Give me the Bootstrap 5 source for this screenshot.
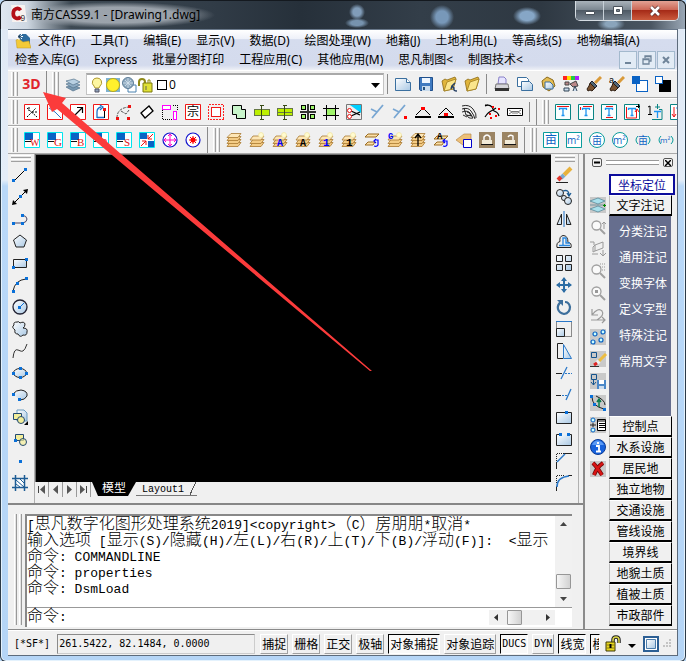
<!DOCTYPE html>
<html lang="zh-CN">
<head>
<meta charset="utf-8">
<meta name="viewport" content="width=device-width, initial-scale=1">
<title>南方CASS9.1 - [Drawing1.dwg]</title>
<link rel="stylesheet" href="https://cdn.jsdelivr.net/npm/bootstrap@5.3.0/dist/css/bootstrap.min.css">
<style>
:root{--face:#f0f0f0;--edge:#8a8a8a}
body{font:12px/16px "Noto Sans","Noto Sans CJK SC",sans-serif;color:#000;background:#b9d7f5}
button{padding:0;border:0;background:none;color:inherit;font:inherit}
svg{display:block;flex:none}
.win{min-height:100vh;padding:0 8px 6px;border-radius:6px;position:relative;overflow:hidden;
 background:linear-gradient(#dfe8f4 0,#e4edf8 180px,#b9d8f8 186px,#b5d5f6 100%);box-shadow:inset 0 0 0 1px #2c3a48,inset 0 0 0 2px #e4f2fd}
.titlebar{height:29px;margin:0 -8px;padding-left:9px;border:1px solid #14191f;border-bottom:0;border-radius:6px 6px 0 0;
 background:radial-gradient(ellipse 98px 13px at 116px 14px,#a9b0b8e0 60%,#a9b0b800 100%),
 radial-gradient(circle 8px at 356px 11px,#819db9 50%,#819db900),radial-gradient(ellipse 12px 5px at 356px 22px,#7793ae 50%,#819db900),
 radial-gradient(circle 12px at 441px 16px,#7898b9 50%,#7898b900),radial-gradient(ellipse 14px 9px at 526px 15px,#86a6c6 50%,#7898b900),
 radial-gradient(ellipse 14px 7px at 610px 23px,#8aa4bb 40%,#7898b900),
 linear-gradient(90deg,#dfe7f2 0,#cfd8e2 26px,#3d4953 70px,#313c47 210px,#26303a 300px,#333e49 420px,#2e3842 540px,#4a5662 650px,#9aa7b5 100%)}
.captions{height:20px;border:1px solid #d5dce2;border-top:0;border-radius:0 0 5px 5px;overflow:hidden;margin-right:6px}
.captions button{width:28px;border-right:1px solid #c7d0d8;background:linear-gradient(#a9b2ba,#7a858f 48%,#4f5a65 50%,#76828e)}
.captions button:last-child{width:46px;border:0;background:linear-gradient(#e2a294,#cc6553 48%,#a62b18 50%,#cb5a3c)}
.client{background:var(--face);border:1px solid #5d6b7b;border-width:0 1px 1px 0}
.menus{min-height:41px;padding:1px 0 0 7px;border-top:1px solid #69788a;background:linear-gradient(#fff,#eef1f9 22%,#d5dcee 24%,#d4dbed 88%,#eef0f6)}
.menus a{color:#000;text-decoration:none;white-space:nowrap;line-height:19px}
.menurow{gap:15px;height:19px}
.menuicon{margin-right:-8px}
.mdi{gap:1px;margin-right:2px}
.mdi button{width:18px;height:18px;border:1px solid #a3b9cd;background:#e2ebf5}
.bar{height:28px;border-top:1px solid #fff;border-bottom:1px solid #a9a9a9;overflow:hidden}
.band{padding:0 3px 0 5px;border-right:1px solid var(--edge);flex:none}
.band:first-child{padding-left:3px}
.band:last-child{border:0}
.grip{width:7px;height:24px;margin-right:2px;flex:none;background:linear-gradient(90deg,#fff 1px,#e4e4e4 1px 2px,#a0a0a0 2px 3px,var(--face) 3px 4px,#fff 4px 5px,#e4e4e4 5px 6px,#a0a0a0 6px)}
.tb{width:23px;height:23px;display:flex;align-items:center;justify-content:center;flex:none}
.tb svg,.lt svg{width:16px;height:16px;overflow:visible}
.split{width:1px;height:20px;background:#8a8a8a;margin:0 3px;flex:none}
.d3{font:bold 14px/20px "Open Sans",sans-serif;color:#e0242c}
.layerbox{width:298px;height:22px;margin-left:2px;padding-left:2px;background:#fff;border:1px solid #c4c4c4;border-top:2px solid #a9a9a9}
.layerbox svg{width:16px;height:16px}
.layerbox select{appearance:none;border:0;background:none;padding:0;font:12px/16px "Open Sans",sans-serif;color:#000;outline:0}
.layerbox .swatch{width:10px;height:10px;border:1px solid #000;margin:0 2px 0 4px}
.toolcol{width:27px;padding-bottom:9px;flex:none;border-right:1px solid #b0b0b0}
.toolcol.modify{width:28px;padding-left:1px;margin-right:4px}
.hgrip{width:20px;height:8px;margin:1px auto;background:linear-gradient(#fff 1px,#e4e4e4 1px 2px,#a0a0a0 2px 3px,var(--face) 3px 4px,#fff 4px 5px,#e4e4e4 5px 6px,#a0a0a0 6px 7px,#0000 7px)}
.lt{width:24px;height:22px;display:flex;align-items:center;justify-content:center}
.shrinkable{min-width:0}
.drawing{background:#000;border:1px solid #6d6d6d;border-width:1px 0 0 1px}
.tabs{height:17px;margin-bottom:4px;font:12px/16px "Liberation Mono","Noto Sans CJK SC",monospace}
.tabs .step{width:14px;height:15px;border-right:1px solid #9a9a9a;display:flex;align-items:center;justify-content:center}
.tabnow{width:44px;color:#fff;background:#000;clip-path:polygon(0 0,100% 0,36px 100%,6px 100%);margin-left:1px;height:14px;line-height:15px}
.tabalt{padding:0 13px 0 6px;font-size:10px;height:14px;line-height:15px;background:linear-gradient(115deg,#0000 calc(100% - 7px),#555 calc(100% - 7px) calc(100% - 6px),#0000 calc(100% - 6px));border-bottom:1px solid #777}
.cmd{border-top:2px solid #868686;padding:9px 11px 2px 6px}
.cmdgrip{width:8px;margin:0 3px 2px 0;background:linear-gradient(90deg,#fff 1px,#e4e4e4 1px 2px,#999 2px 3px,var(--face) 3px 5px,#fff 5px 6px,#e4e4e4 6px 7px,#999 7px)}
.cmdbox{background:#fff;border:1px solid #888;border-width:2px 0 0 2px;min-width:0;font:300 16px/16px "Liberation Mono","Noto Sans CJK SC",monospace}
.cmdbox .lt2{font-size:13px}
.history{height:92px;border-bottom:1px solid #999}
.lines{overflow:hidden;white-space:pre;min-width:0;padding-top:1px}
.lines div{height:16px}
.vscroll{width:17px;background:#f1f1f1;padding:4px 0;flex:none}
.prompt{height:19px}
.prompt input{min-width:0;border:0;outline:0;padding:0;font:13px/16px "Liberation Mono",monospace}
.hscroll{width:66px;background:#f1f1f1;margin-right:17px;padding:0 4px;flex:none}
.thumb{width:15px;height:15px;border:1px solid #979797;border-radius:1px;background:linear-gradient(90deg,#f6f6f6,#d2d2d2)}
.side{width:94px;border-left:2px solid #8b8b8b;flex:none;padding-left:1px}
.sidehead{height:17px;margin-bottom:3px;padding:0 4px 0 6px;gap:4px}
.rule2{height:5px;border:1px solid #999;border-width:1px 0;background:#fff}
.boxbtn{width:10px;height:9px;border:1px solid #555;border-radius:2px;display:flex;align-items:center;justify-content:center}
.sideicons{width:23px;padding-top:20px}
.sideicons .gb{background:#c9c9c9}
.cat{font:12px/16px "Noto Sans CJK SC",sans-serif}
.cat .hd{display:block;width:63px;height:21px;background:var(--face);border:solid #000;border-width:1px 1px 2px;border-left-color:#bbb;border-top-color:#fff;line-height:16px}
.cat .hot{width:66px;height:21px;border:2px solid #0c0c9c;background:#fff;color:#0c0c9c;line-height:15px}
.sub{width:62px;background:#666e8e;padding:2px 0 42px;color:#fff}
.sub button{display:block;width:100%;height:26px;padding-left:10px;text-align:left;white-space:nowrap}
.status{height:26px;border-top:1px solid #8a8a8a;padding:2px 6px 0 6px;gap:4px;font:12px/18px "Noto Sans CJK SC",sans-serif;overflow:hidden;box-shadow:inset 0 1px #fff}
.status .num{font:10px/18px "DejaVu Sans Mono",monospace}
.coord{width:198px;height:20px;border:1px solid #8a8a8a;border-color:#8a8a8a #ccc #ccc #8a8a8a;padding-left:1px;margin:0 1px 0 3px;flex:none}
.st{height:20px;padding:0 1px;border:1px solid;border-color:#fff #a0a0a0 #a0a0a0 #fff;white-space:nowrap;flex:none;line-height:18px}
.st.on{border-color:#000 #fff #fff #000;background:#f8f8f8}
.cutoff{width:10px;overflow:hidden}
.pointer{position:absolute;left:0;top:0;pointer-events:none}
.px{shape-rendering:crispEdges}
</style>
<script src="https://cdn.jsdelivr.net/npm/bootstrap@5.3.0/dist/js/bootstrap.bundle.min.js"></script>
</head>
<body>
<svg width="0" height="0" class="position-absolute" aria-hidden="true"><defs>
<linearGradient id="gl" x1="0" y1="0" x2="1" y2="1"><stop offset="0" stop-color="#fff"/><stop offset="1" stop-color="#a9c8e4"/></linearGradient>
<symbol id="stack" viewBox="0 0 16 16"><g stroke="#a87830" stroke-width=".8" fill="#f3cc86"><path d="M4 10.500h11l-3 4H1z"/><path d="M4 7.500h11l-3 4H1z"/><path d="M4 4.500h11l-3 4H1z"/><path d="M5 1.500h10l-3 4H1z" fill="#fde6b6"/></g></symbol>
<symbol id="low" viewBox="0 0 16 16"><g stroke="#a87830" stroke-width=".8" fill="#f3cc86"><path d="M4 10.500h11l-3 4H1z"/><path d="M4 7.500h11l-3 4H1z"/><path d="M4 4h11l-3 4H1z" fill="#fde6b6"/></g><circle cx="12" cy="3" r="2.500" fill="#fffbd0" stroke="#f0e3a0" stroke-width=".7"/></symbol>
<symbol id="bluebox" viewBox="0 0 16 16"><path d="M.5.5h15v15H.5z" fill="#fff" stroke="#00e5ee"/><path d="M1 1h8v7H1z" fill="#0a62c4"/><path d="M1 9.500h6" stroke="#111"/></symbol>
<symbol id="redbox" viewBox="0 0 16 16"><path d="M.5.5h15v15H.5z" fill="#fff" stroke="#f01818"/></symbol>
<symbol id="tealT" viewBox="0 0 16 16"><path d="M.5.5h15v15H.5z" fill="#f8ffff" stroke="#0a8484"/><path d="M4.500 6V4.500h7V6M8 4.500v7M6.500 11.500h3" fill="none" stroke="#1c94f2" stroke-width="1.300"/></symbol>
<symbol id="sheet" viewBox="0 0 16 16"><path d="M.5 2.500h11l4 4v8H.5z" fill="url(#gl)" stroke="#3a6f9f"/><path d="M11.500 2.500v4h4" fill="#fff" stroke="#3a6f9f"/></symbol>
<symbol id="folder" viewBox="0 0 16 16"><path d="M1 5l3-2 2 1 8-3 1 2-3 10-9 2z" fill="#e0b53c" stroke="#8b6914" stroke-width=".8"/><path d="M3 15l3-9 9-3-3 10z" fill="#fbe68c" stroke="#a07c1c" stroke-width=".8"/></symbol>
<symbol id="brush" viewBox="0 0 16 16"><path d="M15 1L9 7" stroke="#d99a3a" stroke-width="3"/><path d="M6 5l5 5-2 2-5-5z" fill="#526878" stroke="#223"/><path d="M4 7l5 5-3 3-2-1-2 1-1-2 2-3z" fill="#7a5230" stroke="#2c1c10"/></symbol>
<symbol id="mag" viewBox="0 0 16 16"><circle cx="6.500" cy="6.500" r="4.500" fill="#fafafa" stroke="#a0a0a0" stroke-width="1.300"/><path d="M10 10l5 5" stroke="#a0a0a0" stroke-width="2"/></symbol>
</defs></svg>

<div class="win">
<header class="titlebar d-flex align-items-start">
 <svg class="mt-1" width="17" height="19" viewBox="0 0 16 18"><path d="M1 0h13l2 16H2z" fill="#f7f2f0"/><path d="M10 5C8 2 3 3 3 8s5 6 7 3" fill="none" stroke="#b40f18" stroke-width="3.500"/><text x="10" y="15" font-size="8" font-family="Liberation Sans" fill="#444">9</text></svg>
 <span class="ps-1 mt-1 pt-1 text-nowrap lh-1">南方CASS9.1 - [Drawing1.dwg]</span>
 <div class="captions d-flex ms-auto">
  <button aria-label="最小化"><svg class="mx-auto" width="14" height="12"><path d="M2.500 6.500h9v3h-9z" fill="#fff" stroke="#4b535c"/></svg></button>
  <button aria-label="最大化"><svg class="mx-auto" width="14" height="12"><path d="M2.500 1.500h9v8h-9z" fill="#fff" stroke="#4b535c"/><path d="M5.500 4.500h3v2h-3z" fill="#7c858e" stroke="#4b535c"/></svg></button>
  <button aria-label="关闭"><svg class="mx-auto" width="14" height="12"><path d="M3 2l8 8M11 2l-8 8" stroke="#5a3030" stroke-width="4"/><path d="M3 2l8 8M11 2l-8 8" stroke="#fff" stroke-width="2.500"/></svg></button>
 </div>
</header>
<div class="client">
<nav class="menus" aria-label="菜单">
 <div class="menurow d-flex align-items-center">
  <svg class="menuicon" width="16" height="16" viewBox="0 0 16 16"><path d="M4 1h7l4 4v8H4z" fill="#2e6c9e"/><path d="M1 7l3-1 4 3 6-1 2 7H2z" fill="#f3ca38" stroke="#bf9720" stroke-width=".5"/><path d="M4 0v7M1 3.500h7M2 1l5 5M7 1L2 6" stroke="#fff"/><circle cx="4.500" cy="3.500" r="1.500" fill="#246"/></svg>
  <a href="#">文件(F)</a><a href="#">工具(T)</a><a href="#">编辑(E)</a><a href="#">显示(V)</a><a href="#">数据(D)</a><a href="#">绘图处理(W)</a><a href="#">地籍(J)</a><a href="#">土地利用(L)</a><a href="#">等高线(S)</a><a href="#">地物编辑(A)</a>
 </div>
 <div class="menurow d-flex align-items-center">
  <a href="#">检查入库(G)</a><a href="#">Express</a><a href="#">批量分图打印</a><a href="#">工程应用(C)</a><a href="#">其他应用(M)</a><a href="#">思凡制图&lt;</a><a href="#">制图技术&lt;</a>
  <div class="mdi d-flex ms-auto">
   <button aria-label="最小化图形"><svg width="16" height="16"><path d="M5 11h6" stroke="#6f8499" stroke-width="2"/></svg></button>
   <button aria-label="还原图形"><svg width="16" height="16"><path d="M6 6V4h6v5h-2M4 7h6v5H4zM6 4.500h6M4 7.500h6" fill="none" stroke="#6f8499" stroke-width="1.300"/></svg></button>
   <button aria-label="关闭图形"><svg width="16" height="16"><path d="M5 5l6 6M11 5l-6 6" stroke="#6f8499" stroke-width="2"/></svg></button>
  </div>
 </div>
</nav>

<div class="bar d-flex" role="toolbar" aria-label="图层与标准">
 <div class="band d-flex align-items-center"><span class="grip"></span><button class="tb d3">3D</button></div>
 <div class="band d-flex align-items-center"><span class="grip"></span>
  <button class="tb" aria-label="图层特性"><svg viewBox="0 0 16 16"><g stroke="#56748c" stroke-width=".7"><path d="M1 11l8-2 6 3-7 3z" fill="#7797b0"/><path d="M1 8l8-2 6 3-7 3z" fill="#8eacc4"/><path d="M1 5l8-2 6 3-7 3z" fill="#b8d0e2"/></g></svg></button>
  <div class="layerbox d-flex align-items-center">
   <svg viewBox="0 0 16 16"><path d="M8 1a4.500 4.500 0 0 0-3 8l1 2h4l1-2a4.500 4.500 0 0 0-3-8z" fill="#fdf6a0" stroke="#b09a30"/><path d="M6 12h4v3H6z" fill="#8ea0b8" stroke="#556"/></svg>
   <svg viewBox="0 0 16 16"><path d="M1 1h14v14H1z" fill="#7eb2d0"/><circle cx="8" cy="8" r="6.500" fill="#fff02c" stroke="#b6a61e"/></svg>
   <svg viewBox="0 0 16 16"><path d="M7 8h8v7H7z" fill="#fff" stroke="#4a82b0"/><circle cx="7" cy="6" r="5.500" fill="#8faac0" stroke="#5d7d98"/><path d="M2 6h10M7 1v10M4 3l6 6M10 3L4 9" stroke="#d5e3ee" stroke-width=".8"/></svg>
   <svg viewBox="0 0 16 16"><path d="M2 9V5q0-3 3-3t3 3v3" fill="none" stroke="#908a18" stroke-width="2"/><path d="M6 6h9v9H6z" fill="#dfe036" stroke="#7d7a10"/><path d="M11 6V3h2v3" fill="none" stroke="#908a18"/><path d="M9 9v4" stroke="#665"/></svg>
   <span class="swatch"></span>
   <select class="flex-grow-1" aria-label="当前图层"><option>0</option></select>
   <svg viewBox="0 0 16 16"><path d="M4 6h9l-4.500 5z"/></svg>
  </div>
  <span class="split"></span>
  <button class="tb" aria-label="新建"><svg><use href="#sheet"/></svg></button>
  <button class="tb" aria-label="保存"><svg viewBox="0 0 16 16"><path d="M1.500 1.500h13v13h-12l-1-1z" fill="#3f7ac0" stroke="#1f4f8c"/><path d="M4 2h8v5H4z" fill="#eef6ff"/><path d="M4 10h8v5H4z" fill="#c9dcee"/><path d="M5 11h2v3H5z" fill="#24507c"/></svg></button>
  <button class="tb" aria-label="打开"><svg viewBox="0 0 16 16"><use href="#folder"/><path d="M14 7l-3 3 2 2q-1 3 3 3M11 10l-1 3" fill="none" stroke="#243e62" stroke-width="1.500"/></svg></button>
  <button class="tb" aria-label="文件夹"><svg><use href="#folder"/></svg></button>
  <span class="split"></span>
  <button class="tb" aria-label="打印"><svg viewBox="0 0 16 16"><path d="M5 1h5l2 2v5H4z" fill="#e6e4ff" stroke="#8880c8"/><path d="M2 8h12l1 5H1z" fill="#d5d5da" stroke="#777"/><path d="M1 12h14v3H1z" fill="#333"/></svg></button>
  <button class="tb" aria-label="复制"><svg viewBox="0 0 16 16"><path d="M.5 1.500h9l2 2v7H.5z" fill="#fff" stroke="#3a6f9f"/><path d="M4.500 5.500h8l3 3v6h-11z" fill="url(#gl)" stroke="#3a6f9f"/></svg></button>
  <button class="tb" aria-label="粘贴"><svg viewBox="0 0 16 16"><path d="M2 5l5-4 6 3 2 6-6 5-6-4z" fill="#e3bc52" stroke="#8c6a1a"/><path d="M5 6h5l3 3v4H5z" fill="url(#gl)" stroke="#3a6f9f"/></svg></button>
  <button class="tb" aria-label="颜色格式"><svg viewBox="0 0 16 16"><path d="M0 0h4v4H0z" fill="#f22"/><path d="M4 0h4v4H4z" fill="#fd0"/><path d="M8 0h4v4H8z" fill="#2c4"/><path d="M12 0h4v4h-4z" fill="#a2f"/><path d="M2 6h4v3H2zM7 8l6-3 2 5-5 1z" fill="#b88" stroke="#444"/><path d="M1 12h5v3H1zM10 15l2-5 2 5" fill="#cde" stroke="#345"/></svg></button>
  <button class="tb" aria-label="特性匹配"><svg><use href="#brush"/></svg></button>
  <button class="tb" aria-label="属性刷"><svg viewBox="0 0 16 16"><use href="#brush"/><text x="0" y="7" font-size="9" font-family="Liberation Sans">a</text></svg></button>
  <button class="tb" aria-label="前置"><svg class="px" viewBox="0 0 16 16"><path d="M4.500 4.500h11v11h-11z" fill="#fff" stroke="#0a62c4"/><path d="M0 0h8v8H0z" fill="#0a62c4"/></svg></button>
  <button class="tb" aria-label="后置"><svg class="px" viewBox="0 0 16 16"><path d="M4 4h12v12H4z"/><path d="M.5.5h7v7h-7z" fill="#fff" stroke="#0a62c4"/></svg></button>
  <button class="tb" aria-label="置于对象"><svg class="px" viewBox="0 0 16 16"><path d="M.5.5h15v15H.5zM1 7h8v9" fill="#fff" stroke="#0a62c4"/></svg></button>
 </div>
</div>

<div class="bar d-flex" role="toolbar" aria-label="地籍工具">
 <div class="band d-flex align-items-center"><span class="grip"></span>
  <button class="tb" aria-label="交会"><svg viewBox="0 0 16 16"><use href="#redbox"/><path d="M3 4l10 9M3 13l9-9M5 3v4M8 8h5" stroke="#000" stroke-dasharray="2 1"/></svg></button>
  <button class="tb" aria-label="折线"><svg viewBox="0 0 16 16"><use href="#redbox"/><path d="M2 4l6 4 6 6" fill="none" stroke="#2a78c8"/></svg></button>
  <button class="tb" aria-label="方向"><svg viewBox="0 0 16 16"><use href="#redbox"/><path d="M3 13l9-9M7 3.500h5.500V9" fill="none" stroke="#000" stroke-width="1.200"/></svg></button>
  <button class="tb" aria-label="弧"><svg viewBox="0 0 16 16"><use href="#redbox"/><path d="M4 14V8q0-4 4-5M7 1l3 2-3 3M4 13.500h7" fill="none" stroke="#1b72c8" stroke-width="1.300"/><path d="M11.500 4v10" stroke="#000"/><path d="M10 4h3v3h-3z" fill="#e11"/></svg></button>
  <button class="tb" aria-label="圆弧"><svg viewBox="0 0 16 16"><path d="M1 14Q1 4 13 3M5 7l5 3 3-4" fill="none" stroke="#555" stroke-dasharray="3 1"/><path d="M0 13h3v3H0zM12 1h3v3h-3zM11 13h3v3h-3z" fill="#e11"/></svg></button>
  <button class="tb" aria-label="矩形"><svg viewBox="0 0 16 16"><path d="M2 9l8-7 4 5-8 7z" fill="#fff" stroke="#000" stroke-width="1.300"/></svg></button>
  <button class="tb" aria-label="宗地块"><svg class="px" viewBox="0 0 16 16"><path d="M.5 6v9.500H11M11 1h4v5" fill="none" stroke="#000" stroke-dasharray="1 1"/><path d="M.5 1.500h8v4h-8zM11.500 7.500h3v8h-3z" fill="#fff" stroke="#f0f"/></svg></button>
  <button class="tb" aria-label="宗"><svg viewBox="0 0 16 16"><use href="#redbox"/><text x="2" y="12" font-size="12" font-family="Noto Sans CJK SC">宗</text></svg></button>
  <button class="tb" aria-label="界址"><svg class="px" viewBox="0 0 16 16"><path d="M.5.500h15v15H.5z" fill="none" stroke="#f22" stroke-dasharray="2 1"/><path d="M3.500 3.500h9v9h-9z" fill="#fff" stroke="#f01818"/></svg></button>
  <button class="tb" aria-label="合并"><svg viewBox="0 0 16 16"><path d="M1.500 1.500h9v4h4v9h-9v-4h-4z" fill="#c9f5cb" stroke="#000"/></svg></button>
  <button class="tb" aria-label="分割"><svg class="px" viewBox="0 0 16 16"><path d="M.5 5.500h15v6H.5z" fill="#bdf000" stroke="#674"/><path d="M7.500 1v14M6 1.500h4M6 15.500h4" stroke="#374a14"/></svg></button>
  <button class="tb" aria-label="平分"><svg class="px" viewBox="0 0 16 16"><path d="M.5 4.500h15v7H.5zM1 8.500h14" fill="#bdf000" stroke="#674"/><path d="M7.500 1v14M6 1.500h4M6 15.500h4" stroke="#374a14"/></svg></button>
  <button class="tb" aria-label="四分"><svg class="px" viewBox="0 0 16 16"><path d="M1.500 1.500h4v4h-4zM10.500 1.500h4v4h-4zM1.500 10.500h4v4h-4zM10.500 10.500h4v4h-4z" fill="#9df56b" stroke="#000"/><path d="M7.500 0v7M8.500 0v7M7.500 9v7M8.500 9v7M0 7.500h16M0 8.500h16" stroke="#333"/></svg></button>
  <button class="tb" aria-label="网格"><svg class="px" viewBox="0 0 16 16"><path d="M4 4h8v8H4z" fill="#a0f46c"/><path d="M3.500 1v15M12.500 1v15M0 4.500h16M0 11.500h16" stroke="#000"/></svg></button>
  <button class="tb" aria-label="裁剪"><svg viewBox="0 0 16 16"><path d="M.5.500h15v15H.5z" fill="#eee" stroke="#777"/><path d="M4 1h11v8z" fill="#00d0ff"/><path d="M5 7l9 4M5 12l9-4" stroke="#000" stroke-width="1.300"/><circle cx="3.500" cy="6.500" r="2" fill="#fff" stroke="#e11"/><circle cx="3.500" cy="12.500" r="2" fill="#fff" stroke="#e11"/></svg></button>
  <button class="tb" aria-label="相交"><svg viewBox="0 0 16 16"><path d="M3 14L14 1M2 5l6 3" stroke="#78a6d2" stroke-width="1.800"/></svg></button>
  <button class="tb" aria-label="交点"><svg viewBox="0 0 16 16"><path d="M2 14L13 1M1 5l6 3" stroke="#78a6d2" stroke-width="1.800"/><path d="M12 12h3v3h-3z" fill="#f00"/></svg></button>
  <button class="tb" aria-label="顶点"><svg viewBox="0 0 16 16"><path d="M1 11l7-7 7 7" fill="none" stroke="#000"/><path d="M0 12h16v2H0z"/><path d="M6 3h4v3H6z" fill="#f00"/></svg></button>
  <button class="tb" aria-label="底点"><svg viewBox="0 0 16 16"><path d="M1 11l7-7 7 7" fill="none" stroke="#000"/><path d="M0 12h16v2H0z"/><path d="M6 9h4v3H6z" fill="#f00"/></svg></button>
  <button class="tb" aria-label="等高线"><svg viewBox="0 0 16 16"><path d="M1 2q7-2 11 3t3 9M1 5q6-2 9 2t4 8M1 8q6-2 8 1t3 5q-5 1-6-3M3 4l2 7 6 1M6 8q3 0 4 4M2 11l4 2" fill="none" stroke="#111" stroke-width=".9"/></svg></button>
  <button class="tb" aria-label="高程点"><svg viewBox="0 0 16 16"><path d="M1 2q4-2 7 1l2 4q4 1 5 5M1 13q3-5 8-7l3-2M1 1h3" fill="none" stroke="#000" stroke-width="1.200"/><path d="M8 2h2v2H8zM14 4h2v2h-2zM5 9h2v2H5zM6 13h2v2H6zM11 11h2v2h-2z" fill="#f00"/></svg></button>
  <button class="tb" aria-label="图幅"><svg viewBox="0 0 16 16"><path d="M.5 4.500h15v7H.5z" fill="#fff" stroke="#000"/><path d="M2 6l3 2-3 2M14 6l-3 2 3 2M5 7.500h6M5 9h6" fill="none" stroke="#777"/></svg></button>
  <span class="split"></span>
 </div>
 <div class="band d-flex align-items-center"><span class="grip"></span>
  <button class="tb" aria-label="文字上"><svg viewBox="0 0 16 16"><use href="#tealT"/><path d="M2 2.500h12" stroke="#e11"/></svg></button>
  <button class="tb" aria-label="文字左"><svg viewBox="0 0 16 16"><use href="#tealT"/><path d="M5 2.500h9M2.500 3v3" stroke="#e11"/></svg></button>
  <button class="tb" aria-label="文字居中"><svg viewBox="0 0 16 16"><use href="#tealT"/><path d="M5 2.500h7M5 13.500h7" stroke="#e11"/></svg></button>
  <button class="tb" aria-label="文字抬升"><svg viewBox="0 0 16 16"><use href="#tealT"/><path d="M2.500 3v11h10V6M11 8l2-3 2 3" fill="none" stroke="#e11"/><path d="M12 2.500h4M14.500 0v4" stroke="#000"/></svg></button>
  <button class="tb" aria-label="文字编号"><svg viewBox="0 0 16 16"><path d="M12 5.500h3v10H5" fill="none" stroke="#0a8484"/><path d="M7 7.500h7M10.500 7v7" stroke="#1c94f2" stroke-width="1.300"/><path d="M1 3l2-1v8M1 10.500h4" fill="none" stroke="#000"/><path d="M8 3h5M10.500 0v5" stroke="#0a8484"/></svg></button>
  <button class="tb" aria-label="文字下移"><svg viewBox="0 0 16 16"><path d="M.5.5h15v15H.5z" fill="#fff" stroke="#0a8484"/><path d="M4 3v10M2 10l2 3 2-3" fill="none" stroke="#e11"/><path d="M6 4h8M10 4v9" stroke="#1c94f2"/></svg></button>
 </div>
</div>

<div class="bar d-flex" role="toolbar" aria-label="图层工具">
 <div class="band d-flex align-items-center"><span class="grip"></span>
  <button class="tb" aria-label="W"><svg viewBox="0 0 16 16" font-family="Liberation Serif" font-size="10" fill="#d11"><use href="#bluebox"/><text x="6" y="14">W</text></svg></button>
  <button class="tb" aria-label="G"><svg viewBox="0 0 16 16" font-family="Liberation Serif" font-size="11" fill="#d11"><use href="#bluebox"/><text x="7" y="14">G</text></svg></button>
  <button class="tb" aria-label="B"><svg viewBox="0 0 16 16" font-family="Liberation Serif" font-size="11" fill="#d11"><use href="#bluebox"/><text x="7" y="14">B</text></svg></button>
  <button class="tb" aria-label="P"><svg viewBox="0 0 16 16" font-family="Liberation Serif" font-size="11" fill="#d11"><use href="#bluebox"/><text x="8" y="14">P</text></svg></button>
  <button class="tb" aria-label="S"><svg viewBox="0 0 16 16" font-family="Liberation Serif" font-size="11" fill="#d11"><use href="#bluebox"/><text x="8" y="14">S</text></svg></button>
  <button class="tb" aria-label="交换"><svg viewBox="0 0 16 16"><path d="M.5.5h15v15H.5z" fill="#fff" stroke="#00e5ee"/><path d="M1 1h7v6H1zM9 9h6v6H9z" fill="#0a62c4"/><path d="M14 2L9 7M9 3v4h4M2 14l5-5M3 9h4v4" fill="none" stroke="#e11"/></svg></button>
  <button class="tb" aria-label="全图"><svg viewBox="0 0 16 16"><circle cx="8" cy="8" r="7" fill="#fff" stroke="#11c" stroke-width="1.200"/><path d="M8 2v12M2 8h12M6 4l2-2 2 2M6 12l2 2 2-2M4 6L2 8l2 2M12 6l2 2-2 2" fill="none" stroke="#f0c"/></svg></button>
  <button class="tb" aria-label="定位"><svg viewBox="0 0 16 16"><circle cx="8" cy="8" r="7" fill="#fff" stroke="#11c" stroke-width="1.200"/><circle cx="8" cy="8" r="2.500" fill="#f00"/><path d="M8 4v8M4 8h8M5 5l6 6M11 5l-6 6" stroke="#f00"/></svg></button>
 </div>
 <div class="band d-flex align-items-center"><span class="grip"></span>
  <button class="tb" aria-label="图层"><svg><use href="#stack"/></svg></button>
  <button class="tb" aria-label="图层亮显"><svg><use href="#low"/></svg></button>
  <button class="tb" aria-label="图层A"><svg viewBox="0 0 16 16" font-family="Liberation Mono" font-weight="bold" font-size="10"><use href="#low"/><text x="5" y="14" fill="#00f">A</text></svg></button>
  <button class="tb" aria-label="图层A锁"><svg viewBox="0 0 16 16" font-family="Liberation Mono" font-weight="bold" font-size="10"><use href="#low"/><text x="5" y="14">A</text></svg></button>
  <button class="tb" aria-label="图层1"><svg viewBox="0 0 16 16" font-family="Liberation Mono" font-weight="bold" font-size="11"><use href="#low"/><text x="5" y="14" fill="#00f">1</text></svg></button>
  <button class="tb" aria-label="图层1锁"><svg viewBox="0 0 16 16" font-family="Liberation Mono" font-weight="bold" font-size="11"><use href="#low"/><text x="5" y="14">1</text></svg></button>
  <button class="tb" aria-label="恢复"><svg viewBox="0 0 16 16"><path d="M4 2h11l-3 3H1zM4 10h7l-2 3H1z" fill="#fbe0a8" stroke="#9a6a1e"/><path d="M11 8h3v5q-1 2-4 1M12 7l-2 2 2 2" fill="none" stroke="#00f" stroke-width="1.200"/></svg></button>
  <button class="tb" aria-label="图层G"><svg viewBox="0 0 16 16" font-family="Liberation Mono" font-weight="bold" font-size="9"><use href="#low"/><text x="1" y="7" fill="#00f">G</text></svg></button>
  <button class="tb" aria-label="上移"><svg viewBox="0 0 16 16"><use href="#stack"/><path d="M8 14V3M5 6l3-4 3 4" fill="none" stroke="#000" stroke-width="1.300"/></svg></button>
  <button class="tb" aria-label="恢复A"><svg viewBox="0 0 16 16" font-family="Liberation Mono" font-weight="bold" font-size="9"><path d="M4 4h11l-3 3H1zM4 10h7l-2 3H1z" fill="#fbe0a8" stroke="#9a6a1e"/><text x="4" y="7">A</text><path d="M11 9h3v4q-1 2-4 1M12 7l-2 2 2 2" fill="none" stroke="#00f" stroke-width="1.200"/></svg></button>
  <button class="tb" aria-label="取层"><svg viewBox="0 0 16 16"><path d="M0 8l8-6h7v8l-8 3z" fill="#edc078" stroke="#b98a4a" stroke-width=".7"/><path d="M7.500 7.500h8v8h-8z" fill="#fff" stroke="#00c"/></svg></button>
  <button class="tb" aria-label="锁定"><svg viewBox="0 0 16 16"><path d="M0 0h16v16H0z" fill="#9b8463"/><path d="M5 8V5q3-4 6 0v3" fill="none" stroke="#fff" stroke-width="1.400"/><path d="M3 8h10v4H3z" fill="#f1ead8"/><path d="M2 12.500h12" stroke="#111"/></svg></button>
  <button class="tb" aria-label="解锁"><svg viewBox="0 0 16 16"><path d="M0 0h16v16H0z" fill="#9b8463"/><path d="M11 8V4q-3-2-5 1" fill="none" stroke="#fff" stroke-width="1.400"/><path d="M3 8h10v4H3z" fill="#f1ead8"/><path d="M2 12.500h12" stroke="#111"/></svg></button>
 </div>
 <div class="band d-flex align-items-center"><span class="grip"></span>
  <button class="tb" aria-label="亩"><svg viewBox="0 0 16 16"><path d="M.5.5h15v15H.5z" fill="#fff" stroke="#0a9c9c"/><text x="2" y="12" font-size="12" font-family="Noto Sans CJK SC" fill="#0a62c4">亩</text></svg></button>
  <button class="tb" aria-label="平方米"><svg viewBox="0 0 16 16"><path d="M.5.5h15v15H.5z" fill="#fff" stroke="#0a9c9c"/><text x="1" y="12" font-size="10" font-family="Open Sans" fill="#0a62c4">m²</text></svg></button>
  <button class="tb" aria-label="圈亩"><svg viewBox="0 0 16 16"><circle cx="8" cy="8" r="7.500" fill="#fff" stroke="#0a9c9c"/><text x="3" y="12" font-size="10" font-family="Noto Sans CJK SC" fill="#0a62c4">亩</text></svg></button>
  <button class="tb" aria-label="圈平方米"><svg viewBox="0 0 16 16"><circle cx="8" cy="8" r="7.500" fill="#fff" stroke="#0a9c9c"/><text x="1" y="12" font-size="10" font-family="Open Sans" fill="#0a62c4">m²</text></svg></button>
  <button class="tb" aria-label="括号亩"><svg viewBox="0 0 16 16"><path d="M3 4q-4 4 0 8M13 4q4 4 0 8" fill="none" stroke="#0a9c9c"/><text x="3" y="12" font-size="10" font-family="Noto Sans CJK SC" fill="#0a62c4">亩</text></svg></button>
  <button class="tb" aria-label="括号平方米"><svg viewBox="0 0 16 16"><path d="M3 4q-4 4 0 8M13 4q4 4 0 8" fill="none" stroke="#0a9c9c"/><text x="2" y="11" font-size="8" font-family="Open Sans" fill="#0a62c4">m²</text></svg></button>
 </div>
</div>

<div class="d-flex">
<div class="flex-grow-1 d-flex flex-column shrinkable">
 <div class="d-flex">
  <div class="toolcol" role="toolbar" aria-label="绘图">
   <div class="hgrip"></div>
   <button class="lt" aria-label="直线"><svg viewBox="0 0 16 16"><path d="M2 14L14 2" stroke="#000"/><path d="M0 12h3v3H0zM12 1h3v3h-3z" fill="#0a70d8"/></svg></button>
   <button class="lt" aria-label="构造线"><svg viewBox="0 0 16 16"><path d="M1 15L15 1" stroke="#000"/><path d="M0 16l1-5 4 4zM16 0l-1 5-4-4z"/><path d="M7 6h3v3H7z" fill="#0a70d8"/></svg></button>
   <button class="lt" aria-label="多段线"><svg viewBox="0 0 16 16"><path d="M1 12h10q4-1 4-4t-5-4" fill="none" stroke="#446"/><path d="M0 11h3v3H0zM9 11h3v3H9zM9 3h3v3H9z" fill="#0a70d8"/></svg></button>
   <button class="lt" aria-label="多边形"><svg viewBox="0 0 16 16"><path d="M8 2l6.500 5-2.500 7H4L1.500 7z" fill="url(#gl)" stroke="#222"/></svg></button>
   <button class="lt" aria-label="矩形"><svg viewBox="0 0 16 16"><path d="M1.500 4.500h13v8h-13z" fill="url(#gl)" stroke="#222"/><path d="M0 11h3v3H0zM13 3h3v3h-3z" fill="#0a70d8"/></svg></button>
   <button class="lt" aria-label="圆弧"><svg viewBox="0 0 16 16"><path d="M1 14Q3 3 14 2" fill="none" stroke="#222"/><path d="M0 13h3v3H0zM4 5h3v3H4zM13 0h3v3h-3z" fill="#0a70d8"/></svg></button>
   <button class="lt" aria-label="圆"><svg viewBox="0 0 16 16"><circle cx="8" cy="8" r="7" fill="url(#gl)" stroke="#223" stroke-width="1.300"/><path d="M8 8l4-4" stroke="#0a70d8"/><path d="M6 7h3v3H6z" fill="#0a70d8"/></svg></button>
   <button class="lt" aria-label="修订云线"><svg viewBox="0 0 16 16"><path d="M2 4q-1-3 3-3 2-1 3 1 4-2 5 1 0 3-2 4 5 0 4 4 0 4-4 3-3 3-5-1-4 0-3-4-4-3-1-5z" fill="url(#gl)" stroke="#222"/></svg></button>
   <button class="lt" aria-label="样条曲线"><svg viewBox="0 0 16 16"><path d="M1 15Q2 5 6 7t5 1q2-1 4-7" fill="none" stroke="#333"/></svg></button>
   <button class="lt" aria-label="椭圆"><svg viewBox="0 0 16 16"><ellipse cx="8" cy="8" rx="6.500" ry="4.500" fill="url(#gl)" stroke="#222"/><path d="M0 7h3v3H0zM13 7h3v3h-3zM7 2h3v3H7zM7 11h3v3H7z" fill="#0a70d8"/></svg></button>
   <button class="lt" aria-label="椭圆弧"><svg viewBox="0 0 16 16"><path d="M1 7q3-4 8-4 7 1 6 6-2 4-7 4" fill="url(#gl)" stroke="#222"/><path d="M0 6h3v3H0zM6 11h3v3H6z" fill="#0a70d8"/></svg></button>
   <button class="lt" aria-label="插入块"><svg viewBox="0 0 16 16"><path d="M5 1h7l3 3v8H5z" fill="url(#gl)" stroke="#6b9cc0"/><path d="M1.500 4.500h8v6h-8z" fill="#f3ee9a" stroke="#244a70"/><circle cx="9" cy="11" r="3.500" fill="#f3ee9a" stroke="#244a70"/><path d="M16 12v4h-4z"/></svg></button>
   <button class="lt" aria-label="创建块"><svg viewBox="0 0 16 16"><path d="M3.500 3.500h8v6h-8z" fill="#f3ee9a" stroke="#244a70"/><circle cx="11" cy="11" r="3.500" fill="#f3ee9a" fill-opacity=".7" stroke="#244a70"/><path d="M2 8h3v3H2z" fill="#0a70d8"/></svg></button>
   <button class="lt" aria-label="点"><svg viewBox="0 0 16 16"><path d="M7 7h3v3H7z" fill="#0a70d8"/></svg></button>
   <button class="lt" aria-label="填充"><svg viewBox="0 0 16 16"><path d="M4 4h9v9H4z" fill="#fff"/><path d="M3.500 0v16M12.500 0v16M0 3.500h16M0 12.500h16" stroke="#1d5c94" stroke-width="1.500"/><path d="M4 5l8 7M4 9l4 3M8 4l4 4" stroke="#1d5c94"/></svg></button>
  </div>
  <div class="flex-grow-1 d-flex flex-column shrinkable">
   <div class="drawing flex-grow-1"></div>
   <div class="tabs d-flex">
    <button class="step" aria-label="首页"><svg width="9" height="9"><path d="M1.500 1v7" stroke="#444"/><path d="M8 0v9L3 4.500z" fill="#555"/></svg></button>
    <button class="step" aria-label="上一页"><svg width="9" height="9"><path d="M7 0v9L2 4.500z" fill="#555"/></svg></button>
    <button class="step" aria-label="下一页"><svg width="9" height="9"><path d="M2 0v9l5-4.500z" fill="#555"/></svg></button>
    <button class="step" aria-label="末页"><svg width="9" height="9"><path d="M7.500 1v7" stroke="#444"/><path d="M1 0v9l5-4.500z" fill="#555"/></svg></button>
    <button class="tabnow">模型</button><button class="tabalt">Layout1</button>
   </div>
  </div>
  <div class="toolcol modify" role="toolbar" aria-label="修改">
   <div class="hgrip"></div>
   <button class="lt" aria-label="删除"><svg viewBox="0 0 16 16"><path d="M15 1L8 8" stroke="#e8b23c" stroke-width="4"/><path d="M8 8l-3 3" stroke="#7aa8d0" stroke-width="4"/><path d="M5 10l-3 3" stroke="#e0362c" stroke-width="4"/><path d="M0 15.500h12" stroke="#222"/></svg></button>
   <button class="lt" aria-label="复制对象"><svg viewBox="0 0 16 16"><circle cx="4" cy="4" r="3.500" fill="url(#gl)" stroke="#222"/><circle cx="8" cy="9" r="2.500" fill="url(#gl)" stroke="#222"/><circle cx="12" cy="12" r="3.500" fill="url(#gl)" stroke="#222"/><path d="M7 2q6-2 6 4M11 4l2 3 2-3" fill="none" stroke="#1d5c94" stroke-width="1.300"/></svg></button>
   <button class="lt" aria-label="镜像"><svg viewBox="0 0 16 16"><path d="M5.500 3v10.500H1zM10.500 3v10.500H15z" fill="url(#gl)" stroke="#222"/><path d="M8 0v16" stroke="#1d70c8"/></svg></button>
   <button class="lt" aria-label="偏移"><svg viewBox="0 0 16 16"><path d="M1 14.500h14q1-5-3-5 0-7-5-7-4 1-3 6-4 1-3 6" fill="none" stroke="#222"/><path d="M3 12.500h11M7 12V5h3v5h4" fill="none" stroke="#2a88e0" stroke-width="1.400"/></svg></button>
   <button class="lt" aria-label="阵列"><svg viewBox="0 0 16 16"><path d="M.5.5h6v6h-6zM9.500.5h6v6h-6zM.5 9.500h6v6h-6zM9.500 9.500h6v6h-6z" fill="url(#gl)" stroke="#222"/></svg></button>
   <button class="lt" aria-label="移动"><svg viewBox="0 0 16 16"><path d="M8 1v14M1 8h14" stroke="#2d6da4" stroke-width="2"/><path d="M5 4l3-4 3 4zM5 12l3 4 3-4zM4 5L0 8l4 3zM12 5l4 3-4 3z" fill="#2d6da4"/></svg></button>
   <button class="lt" aria-label="旋转"><svg viewBox="0 0 16 16"><path d="M5 3Q1 6 2 10t6 5q6-1 6-7-1-5-5-5" fill="none" stroke="#3d6f9c" stroke-width="2.200"/><path d="M1 1h6v6z" fill="#3d6f9c"/></svg></button>
   <button class="lt" aria-label="缩放"><svg viewBox="0 0 16 16"><path d="M.5.5h15v15H.5z" fill="none" stroke="#222" stroke-dasharray="1 1"/><path d="M.5 7.500h8v8h-8z" fill="url(#gl)" stroke="#222"/><path d="M0 .5h16" stroke="#2a78c8"/></svg></button>
   <button class="lt" aria-label="拉伸"><svg viewBox="0 0 16 16"><path d="M7 .5H1.500v15H7" fill="none" stroke="#222"/><path d="M7.500 1.500l8 14h-8z" fill="url(#gl)" stroke="#2a78c8"/></svg></button>
   <button class="lt" aria-label="修剪"><svg viewBox="0 0 16 16"><path d="M5 14L11 2" stroke="#2a78c8" stroke-width="1.300"/><path d="M0 8.500h6" stroke="#222"/><path d="M9 8.500h7" stroke="#2a78c8" stroke-dasharray="2 1"/></svg></button>
   <button class="lt" aria-label="延伸"><svg viewBox="0 0 16 16"><path d="M10 13L15 2" stroke="#2a78c8" stroke-width="1.300"/><path d="M0 8.500h5" stroke="#222"/><path d="M6 8.500h6" stroke="#2a78c8" stroke-dasharray="2 1"/></svg></button>
   <button class="lt" aria-label="打断于点"><svg viewBox="0 0 16 16"><path d="M.5 3.500h15v11H.5z" fill="url(#gl)" stroke="#222"/><path d="M9 2h3v3H9z" fill="#0a70d8"/></svg></button>
   <button class="lt" aria-label="打断"><svg viewBox="0 0 16 16"><path d="M3 3.500H.5v11h15v-11H13" fill="url(#gl)" stroke="#222"/><path d="M3 2h3v3H3zM11 2h3v3h-3z" fill="#0a70d8"/></svg></button>
   <button class="lt" aria-label="倒角"><svg viewBox="0 0 16 16"><path d="M.5 16V9M8 .5h8" stroke="#222"/><path d="M.5 8V.5H8" fill="none" stroke="#222" stroke-dasharray="1 1"/><path d="M1 9l8-8" stroke="#2a78c8" stroke-width="1.500"/></svg></button>
   <button class="lt" aria-label="圆角"><svg viewBox="0 0 16 16"><path d="M.5 16v-5M12 .5h4" stroke="#222"/><path d="M.5 8V.5H8" fill="none" stroke="#222" stroke-dasharray="1 1"/><path d="M1 12Q1 2 13 1" fill="none" stroke="#2a78c8" stroke-width="1.600"/></svg></button>
  </div>
 </div>
 <section class="cmd flex-grow-1 d-flex" aria-label="命令行">
  <div class="cmdgrip"></div>
  <div class="cmdbox flex-grow-1">
   <div class="history d-flex">
    <div class="lines flex-grow-1"><div><span class="lt2">[</span>思凡数字化图形处理系统<span class="lt2">2019]&lt;copyright&gt;</span>（<span class="lt2">C</span>）房朋朋<span class="lt2">*</span>取消<span class="lt2">*</span></div><div>输入选项<span class="lt2"> [</span>显示<span class="lt2">(S)/</span>隐藏<span class="lt2">(H)/</span>左<span class="lt2">(L)/</span>右<span class="lt2">(R)/</span>上<span class="lt2">(T)/</span>下<span class="lt2">(B)/</span>浮动<span class="lt2">(F)]:  &lt;</span>显示</div><div>命令<span class="lt2">: COMMANDLINE</span></div><div>命令<span class="lt2">: properties</span></div><div>命令<span class="lt2">: DsmLoad</span></div></div>
    <div class="vscroll d-flex flex-column align-items-center">
     <button aria-label="向上滚动"><svg width="7" height="8"><path d="M0 6l3.500-4L7 6z" fill="#444"/></svg></button>
     <span class="thumb mt-auto mb-1"></span>
     <button aria-label="向下滚动"><svg width="7" height="10"><path d="M0 4h7L3.500 8z" fill="#444"/></svg></button>
    </div>
   </div>
   <div class="prompt d-flex align-items-center">
    <label for="cmdline">命令<span class="lt2">:</span></label><input id="cmdline" class="flex-grow-1" type="text">
    <div class="hscroll d-flex align-items-center justify-content-between">
     <button aria-label="向左滚动"><svg width="7" height="15"><path d="M5 4v7L1 7.500z" fill="#333"/></svg></button>
     <span class="thumb me-3"></span>
     <button aria-label="向右滚动"><svg width="7" height="15"><path d="M2 4v7l4-3.500z" fill="#333"/></svg></button>
    </div>
   </div>
  </div>
 </section>
</div>

<aside class="side">
 <div class="sidehead d-flex align-items-center"><button class="boxbtn" aria-label="折叠"><svg width="6" height="5"><path d="M0 2.500h6" stroke="#000" stroke-width="2"/></svg></button><span class="rule2 flex-grow-1"></span><button class="boxbtn" aria-label="关闭面板"><svg width="6" height="6"><path d="M0 0l6 6M6 0L0 6" stroke="#000" stroke-width="1.500"/></svg></button></div>
 <div class="d-flex">
  <div class="sideicons">
   <button class="lt" aria-label="添加图层"><svg class="gb" viewBox="0 0 16 16"><path d="M0 4l8-3 7 3-7 3zM0 12l8-3 7 3-7 3z" fill="#a8e0ec" stroke="#4d8090" stroke-width=".7"/><path d="M0 8h15" stroke="#4d8090" stroke-width=".7"/><path d="M13 8.500h3M14.500 7v3" stroke="#080"/></svg></button>
   <button class="lt" aria-label="实时缩放"><svg viewBox="0 0 16 16"><use href="#mag"/><path d="M14 3v7M12 5l2-2 2 2" fill="none" stroke="#999"/></svg></button>
   <button class="lt" aria-label="窗口"><svg viewBox="0 0 16 16"><path d="M5 4l8-3v6l-8 3zM5 4l-2 2v5l2-1M0 1h4v3M13 9v6M10 12l3 3 3-3M2 13h6" fill="none" stroke="#9a9a9a"/></svg></button>
   <button class="lt" aria-label="缩放窗口"><svg viewBox="0 0 16 16"><use href="#mag"/><path d="M10 1h6M10 4h6M12 7h4" stroke="#999" stroke-dasharray="1 1"/></svg></button>
   <button class="lt" aria-label="中心缩放"><svg viewBox="0 0 16 16"><use href="#mag"/><path d="M5 5h3v3H5z" fill="#999"/></svg></button>
   <button class="lt" aria-label="撤销"><svg viewBox="0 0 16 16"><path d="M2 2v6h6M2 8q6-8 10-4 3 4-5 9M1 13h14M12 10l3 3-3 3" fill="none" stroke="#9a9a9a" stroke-width="1.200"/></svg></button>
   <button class="lt" aria-label="点列"><svg class="gb" viewBox="0 0 16 16"><g fill="#cff" stroke="#0a62c4" stroke-width="1.200"><circle cx="5" cy="5" r="2"/><circle cx="13" cy="3" r="2"/><circle cx="3" cy="13" r="2"/><circle cx="11" cy="11" r="2"/></g></svg></button>
   <button class="lt" aria-label="擦除"><svg class="gb" viewBox="0 0 16 16"><path d="M1.500 1.500h5v5h-5z" fill="none" stroke="#14538c"/><path d="M16 3L9 10" stroke="#edbd40" stroke-width="3"/><path d="M9 10l-2 2" stroke="#eee" stroke-width="4"/><path d="M7 12l-3 2" stroke="#d22" stroke-width="3"/><path d="M0 15.500h9" stroke="#333"/></svg></button>
   <button class="lt" aria-label="存块"><svg class="gb" viewBox="0 0 16 16"><path d="M1.500 1.500h5v5h-5zM3.500 7v5M1 9l2.500 3L6 9" fill="none" stroke="#14538c"/><path d="M7 7h9v9H7z" fill="#4b88c8"/><path d="M9 7h5v4H9z" fill="#fff"/><path d="M9 13h5v3H9z" fill="#cde"/></svg></button>
   <button class="lt" aria-label="编辑线"><svg class="gb" viewBox="0 0 16 16"><path d="M2 2q0 9 12 12M6 1q9 4 9 9" fill="none" stroke="#222"/><path d="M9 12V5M7 7l2-3 2 3" fill="none" stroke="#0a7a4a" stroke-width="1.500"/><path d="M0 0h3v3H0zM3 8h3v3H3zM13 13h3v3h-3z" fill="#0a70d8"/></svg></button>
   <button class="lt" aria-label="属性表"><svg class="gb" viewBox="0 0 16 16"><path d="M7.500 2.500h8v11h-8z" fill="#fff" stroke="#000"/><path d="M8 4h8M9 6.500h6M9 8.500h6M9 10.500h6" stroke="#000"/><circle cx="3" cy="3" r="2" fill="#cff" stroke="#0a62c4"/><circle cx="3" cy="13" r="2" fill="#cff" stroke="#0a62c4"/><path d="M0 8h6M3 6v4" stroke="#222"/></svg></button>
   <button class="lt" aria-label="信息"><svg viewBox="0 0 16 16"><circle cx="8" cy="8" r="7.500" fill="#1762dd" stroke="#0b3b94"/><path d="M2 6q2-5 6-4.500T14 6" fill="#5a9af5"/><path d="M6 7h3v5M6 12.500h5M8 3v2" fill="none" stroke="#fff" stroke-width="1.800"/></svg></button>
   <button class="lt" aria-label="取消"><svg class="gb" viewBox="0 0 16 16"><path d="M3 2q4 4 9 12M13 2Q7 6 4 14" fill="none" stroke="#6c0808" stroke-width="4"/><path d="M3 2q4 4 9 12M13 2Q7 6 4 14" fill="none" stroke="#d81414" stroke-width="2.500"/></svg></button>
  </div>
  <div class="cat">
   <button class="hd hot">坐标定位</button><button class="hd">文字注记</button>
   <div class="sub"><button>分类注记</button><button>通用注记</button><button>变换字体</button><button>定义字型</button><button>特殊注记</button><button>常用文字</button></div>
   <button class="hd">控制点</button><button class="hd">水系设施</button><button class="hd">居民地</button><button class="hd">独立地物</button><button class="hd">交通设施</button><button class="hd">管线设施</button><button class="hd">境界线</button><button class="hd">地貌土质</button><button class="hd">植被土质</button><button class="hd">市政部件</button>
  </div>
 </div>
</aside>
</div>

<footer class="status d-flex align-items-center">
 <span class="num">[*SF*]</span><span class="coord num">261.5422, 82.1484, 0.0000</span>
 <button class="st">捕捉</button><button class="st">栅格</button><button class="st">正交</button><button class="st">极轴</button><button class="st on">对象捕捉</button><button class="st">对象追踪</button><button class="st on num">DUCS</button><button class="st num">DYN</button><button class="st on">线宽</button><button class="st on cutoff">模</button>
 <button aria-label="锁定工具栏"><svg width="18" height="18" viewBox="0 0 18 18"><path d="M9 8V5q0-3 3-3t3 3v3" fill="none" stroke="#222" stroke-width="3.500"/><path d="M9 8V5q0-3 3-3t3 3v3" fill="none" stroke="#ddd84a" stroke-width="1.500"/><path d="M2 7h9v9H2z" fill="#e6d51e" stroke="#3c3808"/><path d="M2 10h9M2 13h9" stroke="#8a7c10"/><path d="M6.500 9v4" stroke="#000" stroke-width="2"/></svg></button>
 <button aria-label="状态栏菜单"><svg width="13" height="18"><path d="M2 9h8l-4 4z"/></svg></button>
 <button aria-label="全屏显示"><svg width="16" height="16"><path d="M1 1h14v14H1z" fill="#fff" stroke="#2c5f94" stroke-width="2"/><path d="M3.500 3.500h9v9h-9z" fill="url(#gl)" stroke="#4b7cab"/></svg></button>
 <svg class="ms-auto" width="9" height="9"><path d="M6 0h2v2H6zM3 3h2v2H3zM6 3h2v2H6zM0 6h2v2H0zM3 6h2v2H3zM6 6h2v2H6z" fill="#c4c4c4"/></svg>
</footer>
</div>
<svg class="pointer" width="380" height="380" aria-hidden="true"><path d="M43 92L66 98L62 103L372 371L370 371L57 109L52 112z" fill="#fb3b3b"/></svg>
</div>
</body>
</html>
